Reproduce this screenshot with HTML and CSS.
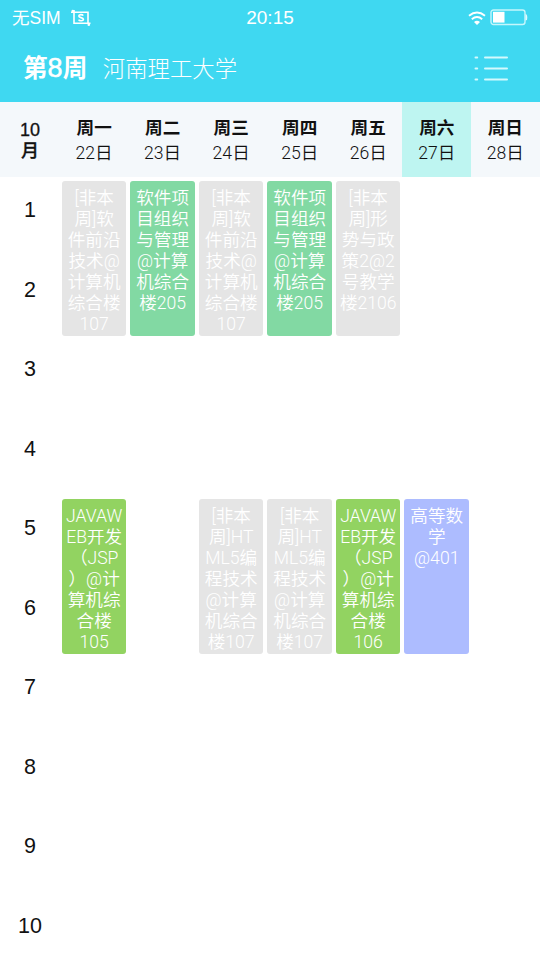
FILE: index.html
```html
<!DOCTYPE html>
<html lang="zh-CN">
<head>
<meta charset="utf-8">
<title>课程表</title>
<link rel="stylesheet" href="styles.css">
</head>
<body>
<header class="top">
  <div class="status">
    <div class="carrier"><span>无SIM</span>
      <svg width="20" height="18" viewBox="0 0 20 18" fill="none" stroke="#fff" stroke-width="1.6"><path d="M0 3.2H17V15M3 1V14.2H19.5"/><circle cx="1.8" cy="2" r="1.3" fill="#fff" stroke="none"/><circle cx="17.8" cy="15.7" r="1.3" fill="#fff" stroke="none"/><path d="M12.2 6.6C11.4 5.2 7.8 5.3 7.8 7.1C7.8 9.2 12.4 8 12.4 10.3C12.4 12.1 8.4 12.2 7.6 10.6"/></svg>
    </div>
    <time>20:15</time>
    <div class="power">
      <svg width="18" height="16" viewBox="0 0 18 16" fill="none" stroke="#fff" stroke-width="1.9"><path d="M1 5.8Q9 -.6 17 5.8M3.8 9.2Q9 5 14.2 9.2"/><path d="M6 12Q9 9.6 12 12L9 15Z" fill="#fff" stroke="none"/></svg>
      <svg width="38" height="18" viewBox="0 0 38 18"><rect x="1" y="1" width="34" height="14.5" rx="2.5" fill="none" stroke="#c5f6fc" stroke-width="1.4"/><rect x="3" y="2.8" width="11.5" height="10.8" fill="#fff"/><path d="M35.5 5Q38 5.5 37 11L35.5 11.5Z" fill="#dffaff"/></svg>
    </div>
  </div>
  <div class="title">
    <h1>第<span>8</span>周</h1><span class="school">河南理工大学</span>
    <svg class="menu" width="34" height="28" viewBox="0 0 34 28" stroke="#d4f9fd" stroke-width="2" stroke-linecap="round"><path d="M1.5 2.6H3.2M11 2.6H33M1.5 13.4H3.2M11 13.4H33M1.5 24.4H3.2M11 24.4H33"/></svg>
  </div>
</header>
<section class="days">
  <div class="month">10<br>月</div>
  <div class="day"><b>周一</b><span>22日</span></div>
  <div class="day"><b>周二</b><span>23日</span></div>
  <div class="day"><b>周三</b><span>24日</span></div>
  <div class="day"><b>周四</b><span>25日</span></div>
  <div class="day"><b>周五</b><span>26日</span></div>
  <div class="day today"><b>周六</b><span>27日</span></div>
  <div class="day"><b>周日</b><span>28日</span></div>
</section>
<main class="table">
  <div class="num n1">1</div><div class="num n2">2</div><div class="num n3">3</div><div class="num n4">4</div><div class="num n5">5</div>
  <div class="num n6">6</div><div class="num n7">7</div><div class="num n8">8</div><div class="num n9">9</div><div class="num n10">10</div>
  <div class="course mon am off">[非本<br>周]软<br>件前沿<br>技术@<br>计算机<br>综合楼<br>107</div>
  <div class="course tue am mint">软件项<br>目组织<br>与管理<br>@计算<br>机综合<br>楼205</div>
  <div class="course wed am off">[非本<br>周]软<br>件前沿<br>技术@<br>计算机<br>综合楼<br>107</div>
  <div class="course thu am mint">软件项<br>目组织<br>与管理<br>@计算<br>机综合<br>楼205</div>
  <div class="course fri am off">[非本<br>周]形<br>势与政<br>策2@2<br>号教学<br>楼2106</div>
  <div class="course mon pm green">JAVAW<br>EB开发<br>（JSP<br>）@计<br>算机综<br>合楼<br>105</div>
  <div class="course wed pm off">[非本<br>周]HT<br>ML5编<br>程技术<br>@计算<br>机综合<br>楼107</div>
  <div class="course thu pm off">[非本<br>周]HT<br>ML5编<br>程技术<br>@计算<br>机综合<br>楼107</div>
  <div class="course fri pm green">JAVAW<br>EB开发<br>（JSP<br>）@计<br>算机综<br>合楼<br>106</div>
  <div class="course sat pm blue">高等数<br>学<br>@401</div>
</main>
</body>
</html>
```
FILE: styles.css
```css
* { box-sizing: border-box; }
body {
  margin: 0;
  width: 540px;
  height: 960px;
  overflow: hidden;
  background: #fff;
  color: #111;
  font-family: Roboto, "Noto Sans CJK SC", sans-serif;
}
svg { display: block; }
.top { height: 102px; background: #3fd8f1; color: #fff; }
.status {
  height: 35px;
  padding: 0 12px;
  display: grid;
  grid-template-columns: 1fr auto 1fr;
  align-items: center;
  line-height: 36px;
  font-family: "Liberation Sans", "Noto Sans CJK SC", sans-serif;
}
.carrier { display: flex; align-items: center; gap: 10px; font-size: 17.5px; }
.status time { font-size: 19px; }
.power { display: flex; justify-content: flex-end; align-items: center; gap: 4px; }
.title { height: 67px; padding: 0 32px 0 23px; display: flex; align-items: center; }
.title h1 { margin: 0; font-size: 24.6px; line-height: 67px; font-weight: 700; }
.title h1 span { font-family: "Liberation Sans", sans-serif; font-weight: 400; font-size: 27px; -webkit-text-stroke: .5px #fff; }
.school { margin-left: 15.5px; font-size: 22.4px; font-weight: 300; line-height: 66px; }
.menu { margin-left: auto; }
.days {
  height: 75px;
  display: grid;
  grid-template-columns: 59.9px repeat(7, 68.53px);
  background: #f4f8fb;
}
.month {
  padding-top: 18px;
  text-align: center;
  font-family: "Liberation Sans", "Noto Sans CJK SC", sans-serif;
  font-size: 18px;
  font-weight: 500;
  line-height: 21px;
  -webkit-text-stroke: .3px #111;
}
.day { padding-top: 14px; display: flex; flex-direction: column; align-items: center; font-size: 17.6px; line-height: 25px; }
.day span { font-weight: 350; }
.today { background: #bef5f1; }
.table {
  height: 783px;
  display: grid;
  grid-template-columns: 59.9px repeat(7, 68.53px);
  grid-template-rows: repeat(10, 79.55px);
  padding-top: 2px;
}
.num {
  grid-column: 1;
  padding-top: 19px;
  text-align: center;
  font-family: "Liberation Sans", sans-serif;
  font-size: 21.5px;
  line-height: 25px;
}
.n1 { grid-row: 1; } .n2 { grid-row: 2; } .n3 { grid-row: 3; } .n4 { grid-row: 4; } .n5 { grid-row: 5; }
.n6 { grid-row: 6; } .n7 { grid-row: 7; } .n8 { grid-row: 8; } .n9 { grid-row: 9; } .n10 { grid-row: 10; }
.course {
  margin: 2px;
  padding-top: 6.5px;
  border-radius: 3px;
  color: #fff;
  text-align: center;
  white-space: nowrap;
  font-size: 17.6px;
  line-height: 21.1px;
  font-weight: 350;
}
.am { grid-row: 1 / 3; }
.pm { grid-row: 5 / 7; }
.mon { grid-column: 2; } .tue { grid-column: 3; } .wed { grid-column: 4; }
.thu { grid-column: 5; } .fri { grid-column: 6; } .sat { grid-column: 7; }
.off { background: #e5e5e5; }
.mint { background: #82d9a3; }
.green { background: #92d361; }
.blue { background: #adbcff; }
```
